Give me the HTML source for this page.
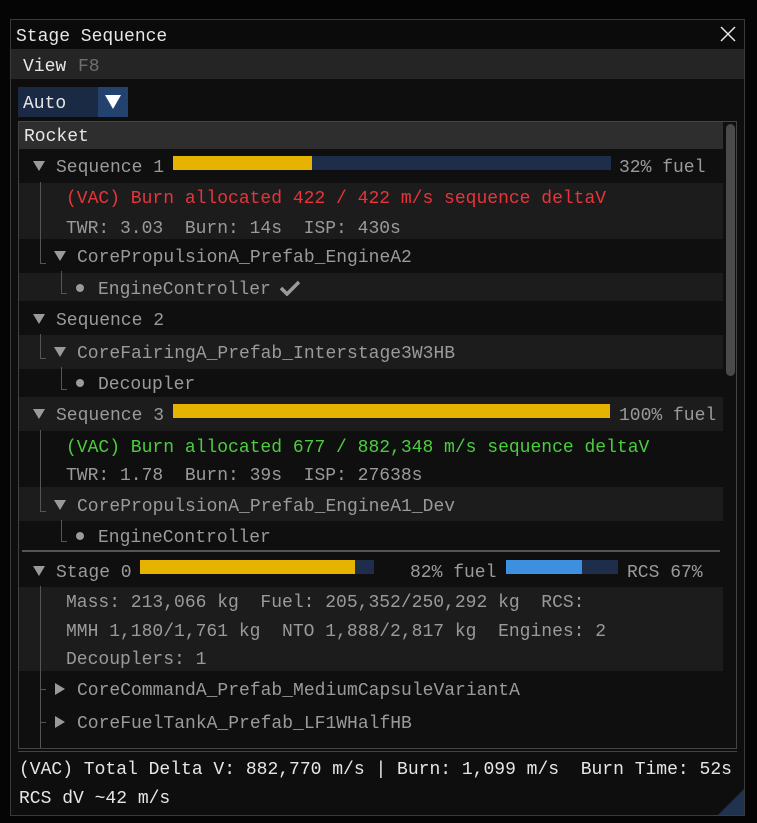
<!DOCTYPE html>
<html><head><meta charset="utf-8"><style>
*{margin:0;padding:0;box-sizing:border-box}
body{width:757px;height:823px;background:#050505;position:relative;overflow:hidden;font-family:"Liberation Mono",monospace;font-size:18px}
.a{position:absolute}
.t{position:absolute;line-height:20px;white-space:pre;color:#9a9a9a;margin-top:2px}
.w{color:#e6e6e6}
.tri{position:absolute;width:0;height:0;border-left:6px solid transparent;border-right:6px solid transparent;border-top:10px solid #9a9a9a}
.tr{position:absolute;width:0;height:0;border-top:6px solid transparent;border-bottom:6px solid transparent;border-left:10px solid #9a9a9a}
.dot{position:absolute;width:8px;height:8px;border-radius:50%;background:#9a9a9a}
.vl{position:absolute;width:1px;background:#555}
.hl{position:absolute;height:1px;background:#555}
.band{position:absolute;left:19px;width:704px;background:#1c1c1c}
</style></head><body>
<div class="a" style="left:10px;top:19px;width:735px;height:797px;background:#0e0e0e;border:1px solid #3a3a3a"></div>
<div class="a" style="left:11px;top:20px;width:733px;height:29px;background:#0b0b0b"></div>
<div class="t w" style="left:16px;top:25px">Stage Sequence</div>
<svg class="a" style="left:720px;top:26px" width="16" height="16"><path d="M1 1L15 15M15 1L1 15" stroke="#e6e6e6" stroke-width="1.5"/></svg>
<div class="a" style="left:11px;top:49px;width:733px;height:30px;background:#252525"></div>
<div class="t w" style="left:23px;top:55px">View</div>
<div class="t" style="left:78px;top:55px;color:#6e6e6e">F8</div>
<div class="a" style="left:18px;top:87px;width:80px;height:30px;background:#1b2a44"></div>
<div class="a" style="left:98px;top:87px;width:30px;height:30px;background:#23426d"></div>
<div class="tri" style="left:105px;top:95px;border-left-width:8px;border-right-width:8px;border-top:14px solid #fff"></div>
<div class="t w" style="left:23px;top:92px">Auto</div>
<div class="a" style="left:18px;top:121px;width:719px;height:628px;border:1px solid #444;background:#0f0f0f"></div>
<div class="a" style="left:19px;top:122px;width:704px;height:27px;background:#2e2e2e"></div>
<div class="t w" style="left:24px;top:125px">Rocket</div>
<div class="a" style="left:726px;top:124px;width:9px;height:252px;border-radius:5px;background:#4a4a4a"></div>
<div class="band" style="top:183px;height:56px"></div>
<div class="band" style="top:273px;height:28px"></div>
<div class="band" style="top:335px;height:34px"></div>
<div class="band" style="top:397px;height:34px"></div>
<div class="band" style="top:487px;height:34px"></div>
<div class="band" style="top:587px;height:84px"></div>
<div class="a" style="left:22px;top:550px;width:698px;height:2px;background:#555"></div>
<div class="tri" style="left:33px;top:161px"></div>
<div class="t" style="left:56px;top:156px">Sequence 1</div>
<div class="a" style="left:173px;top:156px;width:438px;height:14px;background:#1e2d4a"></div>
<div class="a" style="left:173px;top:156px;width:139px;height:14px;background:#e6b400"></div>
<div class="t" style="left:619px;top:156px">32% fuel</div>
<div class="vl" style="left:40px;top:182px;height:82px"></div><div class="hl" style="left:40px;top:263px;width:6px"></div>
<div class="t" style="left:66px;top:187px;color:#e8343a">(VAC) Burn allocated 422 / 422 m/s sequence deltaV</div>
<div class="t" style="left:66px;top:217px">TWR: 3.03  Burn: 14s  ISP: 430s</div>
<div class="tri" style="left:54px;top:251px"></div>
<div class="t" style="left:77px;top:246px">CorePropulsionA_Prefab_EngineA2</div>
<div class="vl" style="left:61px;top:271px;height:23px"></div><div class="hl" style="left:61px;top:293px;width:6px"></div>
<div class="dot" style="left:76px;top:284px"></div>
<div class="t" style="left:98px;top:278px">EngineController</div>
<svg class="a" style="left:279px;top:280px" width="22" height="16"><path d="M2 8L8 14L20 2" stroke="#9a9a9a" stroke-width="3.5" fill="none"/></svg>
<div class="tri" style="left:33px;top:314px"></div>
<div class="t" style="left:56px;top:309px">Sequence 2</div>
<div class="vl" style="left:40px;top:334px;height:25px"></div><div class="hl" style="left:40px;top:358px;width:6px"></div>
<div class="tri" style="left:54px;top:347px"></div>
<div class="t" style="left:77px;top:342px">CoreFairingA_Prefab_Interstage3W3HB</div>
<div class="vl" style="left:61px;top:367px;height:23px"></div><div class="hl" style="left:61px;top:389px;width:6px"></div>
<div class="dot" style="left:76px;top:379px"></div>
<div class="t" style="left:98px;top:373px">Decoupler</div>
<div class="tri" style="left:33px;top:409px"></div>
<div class="t" style="left:56px;top:404px">Sequence 3</div>
<div class="a" style="left:173px;top:404px;width:437px;height:14px;background:#e6b400"></div>
<div class="t" style="left:619px;top:404px">100% fuel</div>
<div class="vl" style="left:40px;top:430px;height:82px"></div><div class="hl" style="left:40px;top:511px;width:6px"></div>
<div class="t" style="left:66px;top:436px;color:#4ccd3f">(VAC) Burn allocated 677 / 882,348 m/s sequence deltaV</div>
<div class="t" style="left:66px;top:464px">TWR: 1.78  Burn: 39s  ISP: 27638s</div>
<div class="tri" style="left:54px;top:500px"></div>
<div class="t" style="left:77px;top:495px">CorePropulsionA_Prefab_EngineA1_Dev</div>
<div class="vl" style="left:61px;top:520px;height:22px"></div><div class="hl" style="left:61px;top:541px;width:6px"></div>
<div class="dot" style="left:76px;top:532px"></div>
<div class="t" style="left:98px;top:526px">EngineController</div>
<div class="tri" style="left:33px;top:566px"></div>
<div class="t" style="left:56px;top:561px">Stage 0</div>
<div class="a" style="left:140px;top:560px;width:234px;height:14px;background:#1e2d4a"></div>
<div class="a" style="left:140px;top:560px;width:215px;height:14px;background:#e6b400"></div>
<div class="t" style="left:410px;top:561px">82% fuel</div>
<div class="a" style="left:506px;top:560px;width:112px;height:14px;background:#1e2d4a"></div>
<div class="a" style="left:506px;top:560px;width:76px;height:14px;background:#3d8fe0"></div>
<div class="t" style="left:627px;top:561px">RCS 67%</div>
<div class="vl" style="left:40px;top:586px;height:162px"></div>
<div class="t" style="left:66px;top:591px">Mass: 213,066 kg  Fuel: 205,352/250,292 kg  RCS:</div>
<div class="t" style="left:66px;top:620px">MMH 1,180/1,761 kg  NTO 1,888/2,817 kg  Engines: 2</div>
<div class="t" style="left:66px;top:648px">Decouplers: 1</div>
<div class="hl" style="left:40px;top:689px;width:6px"></div>
<div class="tr" style="left:55px;top:683px"></div>
<div class="t" style="left:77px;top:679px">CoreCommandA_Prefab_MediumCapsuleVariantA</div>
<div class="hl" style="left:40px;top:722px;width:6px"></div>
<div class="tr" style="left:55px;top:716px"></div>
<div class="t" style="left:77px;top:712px">CoreFuelTankA_Prefab_LF1WHalfHB</div>
<div class="a" style="left:18px;top:751px;width:719px;height:1px;background:#444"></div>
<div class="t w" style="left:19px;top:758px">(VAC) Total Delta V: 882,770 m/s | Burn: 1,099 m/s  Burn Time: 52s</div>
<div class="t w" style="left:19px;top:787px">RCS dV ~42 m/s</div>
<svg class="a" style="left:718px;top:789px" width="26" height="26"><path d="M26 0L26 26L0 26Z" fill="#1f3350"/></svg>
</body></html>
